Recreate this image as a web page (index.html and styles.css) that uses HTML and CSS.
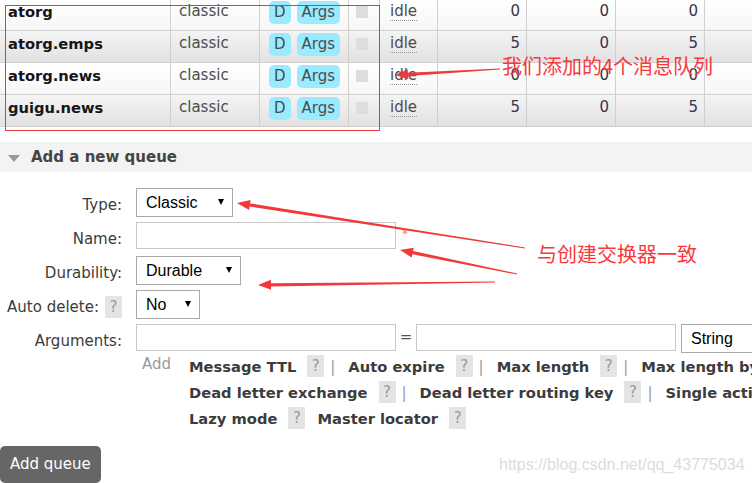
FILE: index.html
```html
<!DOCTYPE html>
<html lang="zh-CN">
<head>
<meta charset="utf-8">
<title>Queues</title>
<link rel="stylesheet" href="styles.css">
</head>
<body>
<div class="page">
  <div class="queues">
    <div class="qrow">
      <div class="c name">atorg</div>
      <div class="c type">classic</div>
      <div class="c feat"><span class="badge">D</span><span class="badge">Args</span></div>
      <div class="c chk"><span class="box"></span></div>
      <div class="c state"><span class="idle">idle</span></div>
      <div class="c num">0</div>
      <div class="c num">0</div>
      <div class="c num">0</div>
      <div class="c"></div>
    </div>
    <div class="qrow alt">
      <div class="c name">atorg.emps</div>
      <div class="c type">classic</div>
      <div class="c feat"><span class="badge">D</span><span class="badge">Args</span></div>
      <div class="c chk"><span class="box"></span></div>
      <div class="c state"><span class="idle">idle</span></div>
      <div class="c num">5</div>
      <div class="c num">0</div>
      <div class="c num">5</div>
      <div class="c"></div>
    </div>
    <div class="qrow">
      <div class="c name">atorg.news</div>
      <div class="c type">classic</div>
      <div class="c feat"><span class="badge">D</span><span class="badge">Args</span></div>
      <div class="c chk"><span class="box"></span></div>
      <div class="c state"><span class="idle">idle</span></div>
      <div class="c num">0</div>
      <div class="c num">0</div>
      <div class="c num">0</div>
      <div class="c"></div>
    </div>
    <div class="qrow alt">
      <div class="c name">guigu.news</div>
      <div class="c type">classic</div>
      <div class="c feat"><span class="badge">D</span><span class="badge">Args</span></div>
      <div class="c chk"><span class="box"></span></div>
      <div class="c state"><span class="idle">idle</span></div>
      <div class="c num">5</div>
      <div class="c num">0</div>
      <div class="c num">5</div>
      <div class="c"></div>
    </div>
  </div>

  <div class="section-head"><span class="tri"></span><span>Add a new queue</span></div>

  <form class="form">
    <div class="frow">
      <label class="flabel">Type:</label>
      <div class="field"><span class="sel"><select class="w-type"><option>Classic</option></select></span></div>
    </div>
    <div class="frow">
      <label class="flabel">Name:</label>
      <div class="field"><input class="txt" type="text"><span class="req">*</span></div>
    </div>
    <div class="frow">
      <label class="flabel">Durability:</label>
      <div class="field"><span class="sel"><select class="w-dur"><option>Durable</option></select></span></div>
    </div>
    <div class="frow">
      <label class="flabel">Auto delete:<span class="help">?</span></label>
      <div class="field"><span class="sel"><select class="w-no"><option>No</option></select></span></div>
    </div>
    <div class="frow args">
      <label class="flabel">Arguments:</label>
      <div class="field"><input class="txt" type="text"><span class="eq">=</span><input class="txt" type="text"><span class="sel str"><select class="w-str"><option>String</option></select></span></div>
    </div>
    <div class="addrow">
      <span class="addlink">Add</span>
      <div class="alines">
        <div class="aline"><span class="ak">Message TTL</span><span class="help">?</span><span class="sep">|</span><span class="ak">Auto expire</span><span class="help">?</span><span class="sep">|</span><span class="ak">Max length</span><span class="help">?</span><span class="sep">|</span><span class="ak">Max length bytes</span><span class="help">?</span><span class="sep">|</span></div>
        <div class="aline"><span class="ak">Dead letter exchange</span><span class="help">?</span><span class="sep">|</span><span class="ak">Dead letter routing key</span><span class="help">?</span><span class="sep">|</span><span class="ak">Single active consumer</span><span class="help">?</span></div>
        <div class="aline"><span class="ak">Lazy mode</span><span class="help gap">?</span><span class="ak">Master locator</span><span class="help">?</span></div>
      </div>
    </div>
    <button class="btn" type="button">Add queue</button>
  </form>

  <div class="redbox"></div>
  <svg class="arrows" width="752" height="483" viewBox="0 0 752 483">
    <polygon points="395,75 407.7,69.3 407.9,72.7 500,68.5 500,69.5 408.1,75.9 408.3,79.3"/>
    <polygon points="237,203 250.6,200.1 250.1,203.4 525.1,247.5 524.9,248.5 249.6,206.6 249.1,210"/>
    <polygon points="400,250 413.7,247.7 413.1,251 517.1,273.5 516.9,274.5 412.4,254.2 411.7,257.5"/>
    <polygon points="258,285 270.9,279.8 271,283.2 495,281.5 495,282.5 271,286.4 271.1,289.8"/>
  </svg>
  <span class="note note1">我们添加的4个消息队列</span>
  <span class="note note2">与创建交换器一致</span>
  <span class="watermark">https://blog.csdn.net/qq_43775034</span>
</div>
</body>
</html>
```

FILE: styles.css
```css
* { box-sizing: border-box; }
html, body { margin: 0; padding: 0; background: #fff; }
body {
  font-family: "DejaVu Sans", Verdana, sans-serif;
  font-size: 15px;
  color: #404040;
}
.page {
  position: relative;
  width: 752px;
  height: 483px;
  overflow: hidden;
}

/* queue list */
.queues { margin-top: -1px; width: 801px; }
.qrow {
  display: grid;
  grid-template-columns: 171px 89px 89px 31px 58px 89px 89px 89px 96px;
  height: 32px;
  border-bottom: 1px solid #cfcfcf;
  background: linear-gradient(#ffffff, #f6f6f6);
}
.qrow.alt { background: linear-gradient(#f4f4f4, #e2e2e2); }
.c {
  border-right: 1px solid #cfcfcf;
  padding: 3px 8px 0;
  line-height: 19px;
  white-space: nowrap;
}
.name { font-weight: bold; font-size: 14.7px; color: #161616; }
.type { color: #4c4c4c; }
.feat { display: flex; gap: 6px; align-items: flex-start; padding: 2px 0 0 9px; }
.badge {
  display: inline-block;
  background: #99ebff;
  color: #4c4c4c;
  border-radius: 5px;
  padding: 2px 5px;
  line-height: 19px;
}
.chk { padding: 7px 0 0 7px; }
.box { display: block; width: 12px; height: 12px; background: #dedede; }
.state { padding-left: 10px; color: #4c4c4c; }
.idle { border-bottom: 1px dotted #999; }
.num { text-align: right; padding-right: 6px; color: #363644; }

/* section header */
.section-head {
  margin-top: 15px;
  height: 30px;
  background: #f3f3f3;
  display: flex;
  align-items: center;
  gap: 11px;
  padding-left: 8px;
  font-weight: bold;
  font-size: 15px;
  color: #444;
}
.tri {
  width: 0;
  height: 0;
  margin-top: 2px;
  border-left: 6.5px solid transparent;
  border-right: 6.5px solid transparent;
  border-top: 7px solid #9a9a9a;
}

/* form */
.form { padding-top: 16px; margin: 0; }
.frow {
  display: grid;
  grid-template-columns: 122px auto;
  column-gap: 14px;
  height: 34px;
}
.frow.args { height: 30px; }
.flabel {
  display: flex;
  justify-content: flex-end;
  align-items: flex-start;
  gap: 6px;
  padding-top: 8px;
  line-height: 19px;
  color: #3c3c3c;
  white-space: nowrap;
}
.flabel .help { margin: -2px 0 0 0; }
.field { display: flex; align-items: flex-start; white-space: nowrap; }

.sel { position: relative; display: inline-block; }
.sel select {
  -webkit-appearance: none;
  appearance: none;
  height: 29px;
  margin: 0;
  border: 1px solid #a9a9a9;
  border-radius: 0;
  background: #fff;
  padding: 0 0 0 9px;
  font: 16px "Liberation Sans", Arial, sans-serif;
  color: #000;
}
.sel::after {
  content: "";
  position: absolute;
  right: 9px;
  top: 11px;
  border-left: 3.5px solid transparent;
  border-right: 3.5px solid transparent;
  border-top: 6px solid #000;
  pointer-events: none;
}
.str::after { display: none; }
.w-type { width: 97px; }
.w-dur { width: 105px; }
.w-no { width: 64px; }
.w-str { width: 110px; }
.str { margin-left: 5px; }

.txt {
  width: 260px;
  height: 27px;
  margin: 0;
  border: 1px solid #c8c8c8;
  border-radius: 0;
  padding: 0 4px;
  font: 16px "Liberation Sans", Arial, sans-serif;
  background: #fff;
}
.req { color: #f77; font-size: 12px; line-height: 12px; margin: 6px 0 0 6px; }
.eq { width: 20px; text-align: center; line-height: 27px; color: #555; }

.addrow {
  display: grid;
  grid-template-columns: 53px auto;
  margin-left: 136px;
}
.addlink { padding-left: 6px; line-height: 20px; color: #999; }
.aline { display: flex; align-items: flex-start; height: 26px; white-space: nowrap; }
.ak { font-weight: bold; font-size: 14.7px; line-height: 26px; color: #3c3c3c; }
.help {
  display: inline-block;
  flex: none;
  width: 17px;
  height: 22px;
  line-height: 22px;
  margin: 1px 0 0 11px;
  background: #e4e4e4;
  color: #999;
  text-align: center;
  font-weight: normal;
  font-size: 15px;
}
.help.gap { margin-right: 12px; }
.sep { line-height: 26px; color: #999; margin: 0 13px 0 6px; font-weight: normal; }

.btn {
  display: block;
  margin: 14px 0 0 0;
  height: 37px;
  padding: 0 10px;
  border: none;
  border-radius: 5px;
  background: #666;
  color: #fff;
  font: 15px "DejaVu Sans", Verdana, sans-serif;
  line-height: 37px;
}

/* annotations overlay */
.redbox {
  position: absolute;
  left: 5px;
  top: 5px;
  width: 375px;
  height: 126px;
  border: 1px solid #e43a3a;
  pointer-events: none;
}
.arrows { position: absolute; left: 0; top: 0; pointer-events: none; }
.arrows polygon { fill: #f2383a; }
.note {
  position: absolute;
  font-family: "Noto Sans CJK SC", sans-serif;
  font-size: 20px;
  line-height: 20px;
  color: #f8383a;
  white-space: nowrap;
}
.note1 { left: 502px; top: 56px; }
.note2 { left: 537px; top: 244px; }
.watermark {
  position: absolute;
  left: 499px;
  top: 455px;
  font: 16px/20px "Liberation Sans", Arial, sans-serif;
  color: #dcdcdc;
  white-space: nowrap;
}
```
